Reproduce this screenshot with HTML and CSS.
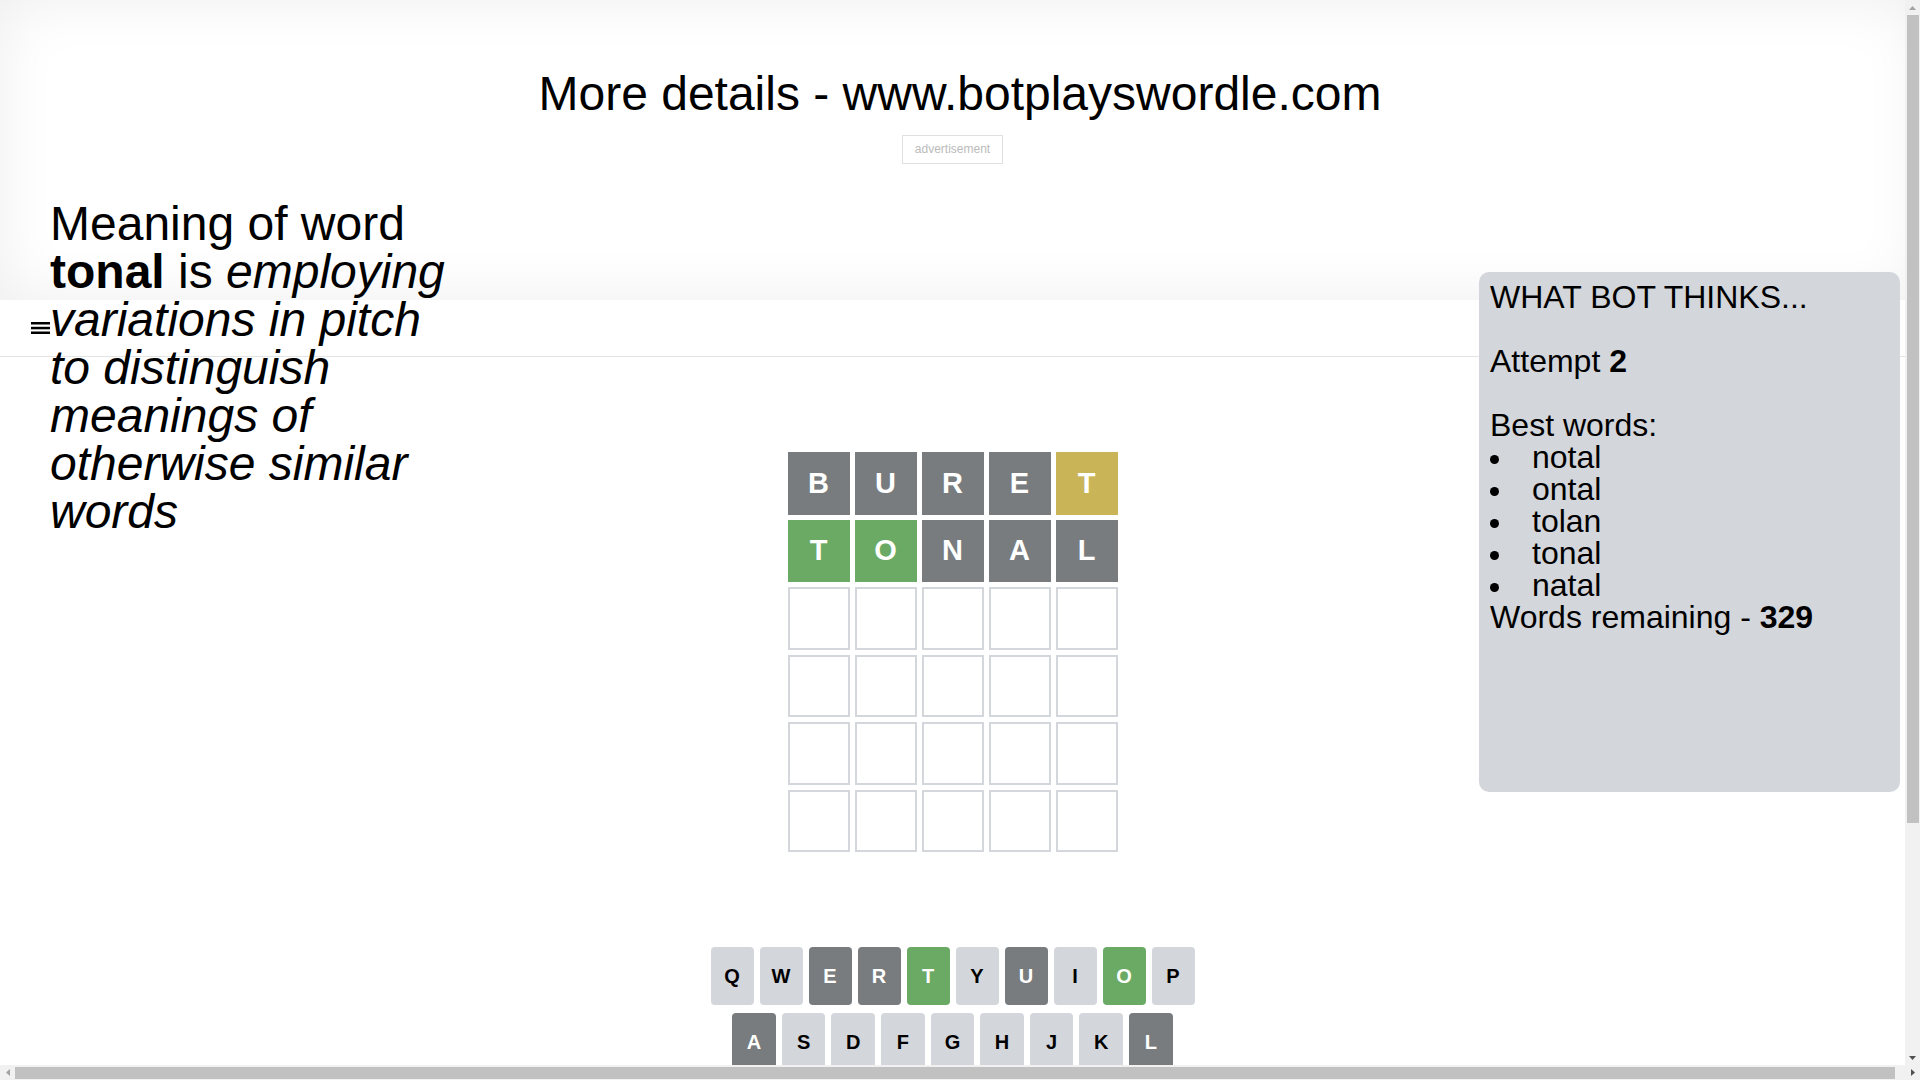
FILE: index.html
```html
<!DOCTYPE html>
<html lang="en">
<head>
    <meta charset="UTF-8">
    <meta name="viewport" content="width=device-width, initial-scale=1.0">
    <title>Bot plays Wordle - tonal</title>
    <link rel="stylesheet" href="styles.css">
</head>
<body>
    <!-- Top banner -->
    <div class="top">
        <h1>More details - www.botplayswordle.com</h1>
        <div class="ad-row">
            <div class="ad">advertisement</div>
        </div>
    </div>

    <!-- Navigation Bar -->
    <div class="navbar">
        <svg class="menu" width="19" height="12" viewBox="0 0 19 12">
            <rect x="0" y="0" width="19" height="2.5" fill="#000"/>
            <rect x="0" y="4.8" width="19" height="2.5" fill="#000"/>
            <rect x="0" y="9.5" width="19" height="2.5" fill="#000"/>
        </svg>
    </div>

    <!-- Word meaning -->
    <div class="meaning">
        Meaning of word <b>tonal</b> is <i>employing variations in pitch to distinguish meanings of otherwise similar words</i>
    </div>

    <!-- Bot panel -->
    <div class="bot-panel">
        WHAT BOT THINKS...<br><br>
        Attempt <b>2</b><br><br>
        Best words:
        <ul>
            <li>notal</li>
            <li>ontal</li>
            <li>tolan</li>
            <li>tonal</li>
            <li>natal</li>
        </ul>
        Words remaining - <b>329</b>
    </div>

    <div class="game">
        <div class="board-container">
            <div class="board">
                <div class="board-row">
                    <div class="tile absent">b</div>
                    <div class="tile absent">u</div>
                    <div class="tile absent">r</div>
                    <div class="tile absent">e</div>
                    <div class="tile present">t</div>
                </div>
                <div class="board-row">
                    <div class="tile correct">t</div>
                    <div class="tile correct">o</div>
                    <div class="tile absent">n</div>
                    <div class="tile absent">a</div>
                    <div class="tile absent">l</div>
                </div>
                <div class="board-row">
                    <div class="tile"></div><div class="tile"></div><div class="tile"></div><div class="tile"></div><div class="tile"></div>
                </div>
                <div class="board-row">
                    <div class="tile"></div><div class="tile"></div><div class="tile"></div><div class="tile"></div><div class="tile"></div>
                </div>
                <div class="board-row">
                    <div class="tile"></div><div class="tile"></div><div class="tile"></div><div class="tile"></div><div class="tile"></div>
                </div>
                <div class="board-row">
                    <div class="tile"></div><div class="tile"></div><div class="tile"></div><div class="tile"></div><div class="tile"></div>
                </div>
            </div>
        </div>

        <div class="keyboard">
            <div class="kb-row">
                <button class="key">q</button>
                <button class="key">w</button>
                <button class="key absent">e</button>
                <button class="key absent">r</button>
                <button class="key correct">t</button>
                <button class="key">y</button>
                <button class="key absent">u</button>
                <button class="key">i</button>
                <button class="key correct">o</button>
                <button class="key">p</button>
            </div>
            <div class="kb-row">
                <div class="spacer half"></div>
                <button class="key absent">a</button>
                <button class="key">s</button>
                <button class="key">d</button>
                <button class="key">f</button>
                <button class="key">g</button>
                <button class="key">h</button>
                <button class="key">j</button>
                <button class="key">k</button>
                <button class="key absent">l</button>
                <div class="spacer half"></div>
            </div>
            <div class="kb-row">
                <button class="key wide small">enter</button>
                <button class="key">z</button>
                <button class="key">x</button>
                <button class="key">c</button>
                <button class="key">v</button>
                <button class="key absent">b</button>
                <button class="key absent">n</button>
                <button class="key">m</button>
                <button class="key wide small">&#9003;</button>
            </div>
        </div>
    </div>

    <div class="bottom-space"></div>

    <!-- window scrollbars -->
    <div class="vscroll" aria-hidden="true">
        <div class="sb-btn">
            <svg width="7" height="4" viewBox="0 0 7 4"><polygon points="3.5,0 7,4 0,4" fill="#a3a3a3"/></svg>
        </div>
        <div class="vthumb"></div>
        <div class="sb-fill"></div>
        <div class="sb-btn">
            <svg width="7" height="4" viewBox="0 0 7 4"><polygon points="0,0 7,0 3.5,4" fill="#505050"/></svg>
        </div>
    </div>
    <div class="hscroll" aria-hidden="true">
        <div class="sb-btn">
            <svg width="4" height="7" viewBox="0 0 4 7"><polygon points="4,0 4,7 0,3.5" fill="#a3a3a3"/></svg>
        </div>
        <div class="hthumb"></div>
        <div class="sb-fill"></div>
        <div class="sb-btn">
            <svg width="4" height="7" viewBox="0 0 4 7"><polygon points="0,0 4,3.5 0,7" fill="#505050"/></svg>
        </div>
    </div>
</body>
</html>
```

FILE: styles.css
```css
body {
    font-family: "Liberation Sans", Arial, sans-serif;
    margin: 0;
    width: 1905px;
    position: relative;
    background-color: white;
    color: #000;
}
.top {
    width: 100vw;
    height: 300px;
    box-sizing: border-box;
    padding-top: 66px;
    box-shadow: inset 0 0 60px rgba(0, 0, 0, 0.07);
}
.top h1 {
    margin: 0;
    font-size: 48px;
    font-weight: normal;
    line-height: 55px;
    text-align: center;
}
.ad-row {
    display: flex;
    justify-content: center;
    padding-right: 15px;
    margin-top: 14px;
}
.ad {
    border: 1px solid #e0e0e0;
    padding: 6px 12px;
    font-size: 12px;
    line-height: 15px;
    color: #bbb;
}
.navbar {
    height: 56px;
    border-bottom: 1px solid #e4e4e4;
    display: flex;
    align-items: center;
    padding-left: 31px;
}
.meaning {
    position: absolute;
    top: 200px;
    left: 50px;
    width: 410px;
    font-size: 48px;
    line-height: 48px;
}
.bot-panel {
    position: absolute;
    top: 272px;
    right: 5px;
    width: 421px;
    height: 520px;
    box-sizing: border-box;
    padding: 9px 11px;
    background-color: #d3d6da;
    border-radius: 10px;
    font-size: 32px;
    line-height: 32px;
}
.bot-panel ul {
    list-style: none;
    margin: 0;
    padding: 0;
}
.bot-panel li::before {
    content: "";
    display: inline-block;
    width: 9px;
    height: 9px;
    border-radius: 50%;
    background-color: #000;
    margin-right: 33px;
    vertical-align: middle;
}
.game {
    width: 500px;
    margin: 0 auto;
}
.board-container {
    height: 590px;
    display: flex;
    align-items: center;
    justify-content: center;
}
.board {
    width: 350px;
    height: 420px;
    box-sizing: border-box;
    padding: 10px;
    display: grid;
    grid-template-rows: repeat(6, 1fr);
    gap: 5px;
}
.board-row {
    display: grid;
    grid-template-columns: repeat(5, 1fr);
    gap: 5px;
}
.tile {
    border: 2px solid #d3d6da;
    box-sizing: border-box;
    display: flex;
    align-items: center;
    justify-content: center;
    font-size: 29px;
    font-weight: bold;
    text-transform: uppercase;
    color: white;
}
.tile.absent {
    background-color: #787c7e;
    border-color: #787c7e;
}
.tile.present {
    background-color: #c9b458;
    border-color: #c9b458;
}
.tile.correct {
    background-color: #6aaa64;
    border-color: #6aaa64;
}
.keyboard {
    margin: 0 8px;
    height: 200px;
}
.kb-row {
    display: flex;
    margin-bottom: 8px;
}
.key {
    flex: 1;
    height: 58px;
    margin: 0 6px 0 0;
    padding: 0;
    border: 0;
    border-radius: 4px;
    background-color: #d3d6da;
    color: #000;
    font-family: "Liberation Sans", Arial, sans-serif;
    font-size: 20px;
    font-weight: bold;
    text-transform: uppercase;
    display: flex;
    align-items: center;
    justify-content: center;
}
.key:last-of-type {
    margin-right: 0;
}
.key.absent {
    background-color: #787c7e;
    color: white;
}
.key.correct {
    background-color: #6aaa64;
    color: white;
}
.key.wide {
    flex: 1.5;
}
.key.small {
    font-size: 12px;
}
.half {
    flex: 0.5;
}
.bottom-space {
    height: 217px;
}

/* window scrollbars, drawn over the page */
.vscroll,
.hscroll {
    position: fixed;
    display: flex;
    background-color: #f1f1f1;
    z-index: 10;
}
.vscroll {
    top: 0;
    right: 0;
    width: 15px;
    height: 1065px;
    flex-direction: column;
}
.hscroll {
    left: 0;
    bottom: 0;
    width: 1920px;
    height: 15px;
}
.sb-btn {
    width: 15px;
    height: 15px;
    flex: none;
    display: flex;
    align-items: center;
    justify-content: center;
}
.sb-btn svg {
    display: block;
}
.sb-fill {
    flex: 1;
}
.vthumb {
    height: 808px;
    margin: 0 1px 0 2px;
    background-color: #c1c1c1;
}
.hthumb {
    width: 1880px;
    margin: 2px 0 1px 0;
    background-color: #c1c1c1;
}
```
